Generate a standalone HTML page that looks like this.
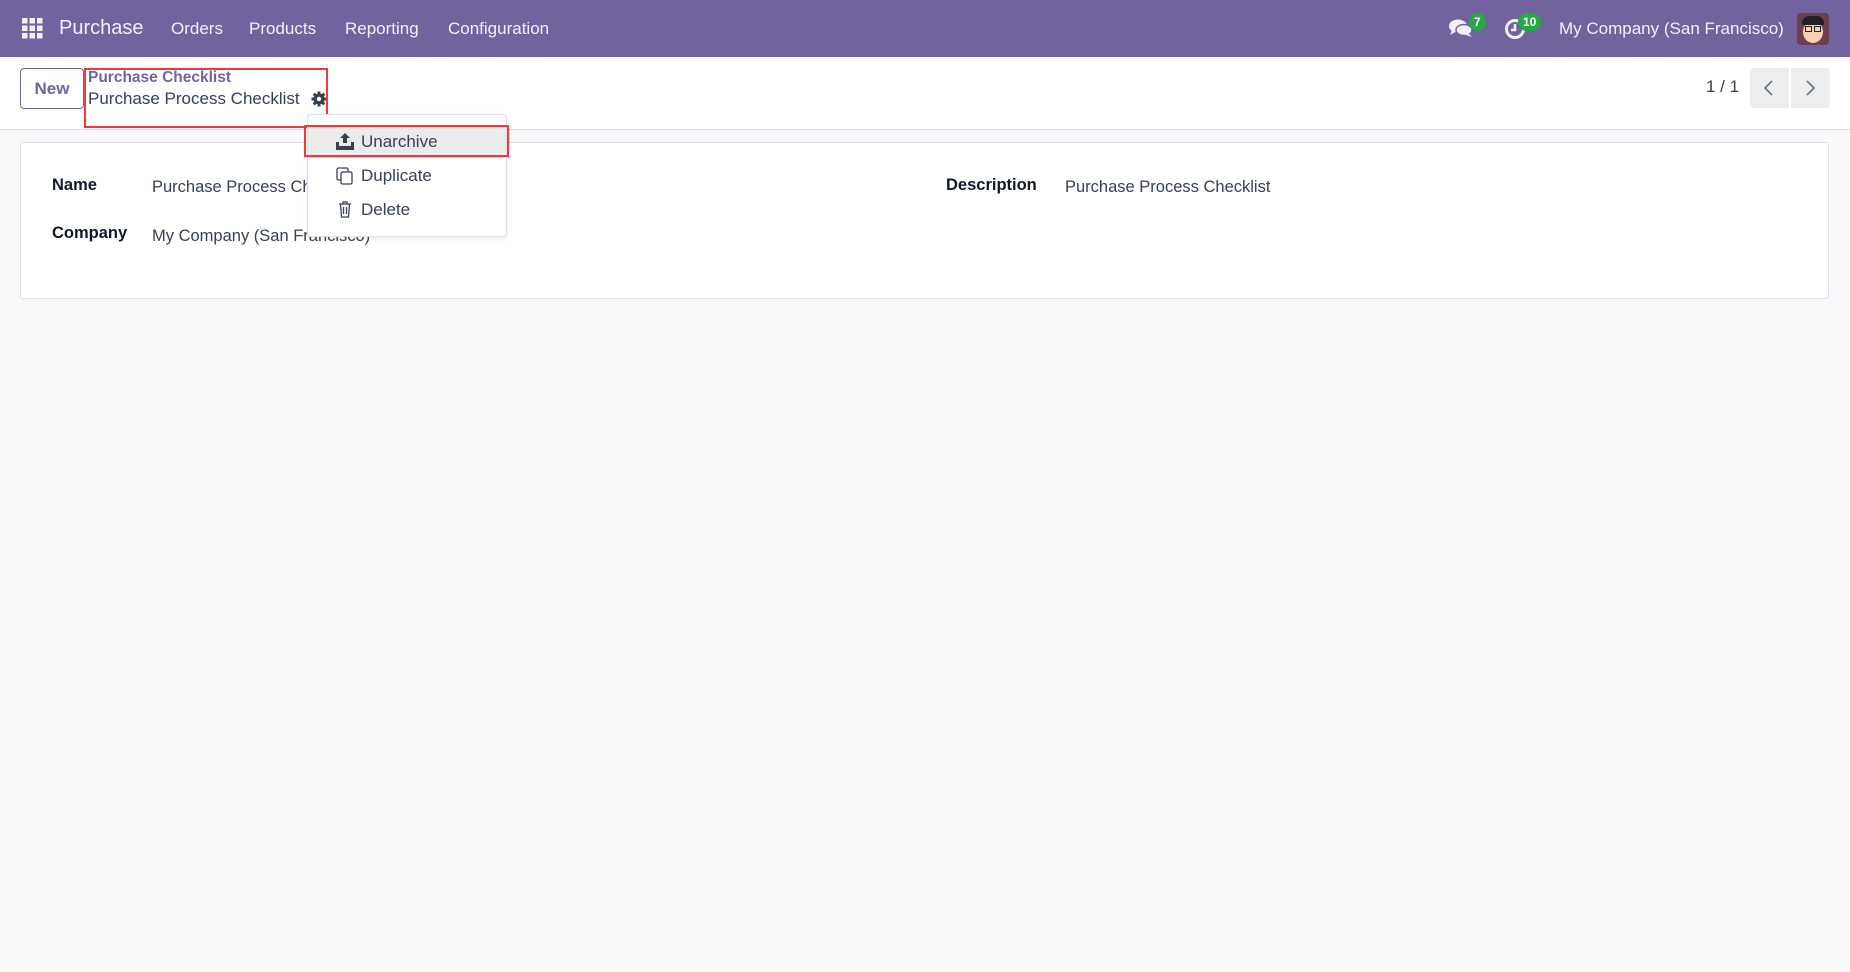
<!DOCTYPE html>
<html><head><meta charset="utf-8"><style>
*{box-sizing:border-box;margin:0;padding:0}
body{width:1850px;height:972px;background:#f8f9fa;font-family:"Liberation Sans",sans-serif;color:#374151;position:relative;overflow:hidden}
.nav{position:absolute;left:0;top:0;width:1850px;height:57px;background:#71639e;color:#fff}
.nav span{position:absolute;top:19px;font-size:17px;color:#f2f0f7}
.cp{position:absolute;left:0;top:57px;width:1850px;height:73px;background:#fff;border-bottom:1px solid #dee2e6}
.abs{position:absolute}
.card{position:absolute;left:20px;top:142px;width:1809px;height:157px;background:#fff;border:1px solid #dee2e6;border-radius:3px}
.lbl{position:absolute;font-weight:bold;font-size:16.5px;color:#111827}
.val{position:absolute;font-size:16.5px;color:#374151}
.badge{position:absolute;background:#28a745;color:#fff;font-size:12px;font-weight:bold;border-radius:9px;height:18px;line-height:18px;padding:0 5px}
</style></head><body>
<div class="nav">
 <svg class="abs" style="left:22px;top:18px" width="21" height="21" viewBox="0 0 21 21" fill="#f2f0f7">
  <rect x="0" y="0" width="5.5" height="5.5"/><rect x="7.5" y="0" width="5.5" height="5.5"/><rect x="15" y="0" width="5.5" height="5.5"/>
  <rect x="0" y="7.5" width="5.5" height="5.5"/><rect x="7.5" y="7.5" width="5.5" height="5.5"/><rect x="15" y="7.5" width="5.5" height="5.5"/>
  <rect x="0" y="15" width="5.5" height="5.5"/><rect x="7.5" y="15" width="5.5" height="5.5"/><rect x="15" y="15" width="5.5" height="5.5"/>
 </svg>
 <span style="left:59px;top:17px;font-size:20px">Purchase</span>
 <span style="left:171px">Orders</span>
 <span style="left:249px">Products</span>
 <span style="left:345px">Reporting</span>
 <span style="left:448px">Configuration</span>
 <svg class="abs" style="left:1449px;top:18px" width="24" height="20" viewBox="0 0 24 20" fill="#f2f0f7"><ellipse cx="9" cy="8" rx="9" ry="6.5"/><path d="M3 12 L1 17 L8 13Z"/><ellipse cx="15" cy="12" rx="8" ry="5.5" fill="#f2f0f7" stroke="#71639e" stroke-width="1.5"/><path d="M19 15 L23 19 L14 16Z"/></svg>
 <div class="badge" style="left:1469px;top:13px">7</div>
 <svg class="abs" style="left:1504px;top:18px" width="22" height="22" viewBox="0 0 22 22"><circle cx="11" cy="11" r="8.5" fill="none" stroke="#f2f0f7" stroke-width="3"/><path d="M11 6V12H7" fill="none" stroke="#f2f0f7" stroke-width="2.5"/></svg>
 <div class="badge" style="left:1518px;top:13px">10</div>
 <span style="left:1559px">My Company (San Francisco)</span>
 <div class="abs" style="left:1797px;top:13px;width:32px;height:32px;border-radius:4px;background:#6b3f4f;overflow:hidden">
  <div class="abs" style="left:6px;top:8px;width:20px;height:22px;border-radius:50%;background:#f6d2b5"></div>
  <div class="abs" style="left:5px;top:3px;width:22px;height:9px;border-radius:8px 8px 2px 2px;background:#222"></div>
  <div class="abs" style="left:8px;top:13px;width:7px;height:6px;border:1.5px solid #222"></div>
  <div class="abs" style="left:17px;top:13px;width:7px;height:6px;border:1.5px solid #222"></div>
 </div>
</div>
<div class="cp">
 <div class="abs" style="left:20px;top:11px;width:64px;height:41px;border:1px solid #71639e;border-radius:4px;color:#71639e;font-weight:bold;font-size:17px;text-align:center;line-height:39px">New</div>
 <div class="abs" style="left:88px;top:12px;color:#71639e;font-weight:bold;font-size:15.5px">Purchase Checklist</div>
 <div class="abs" style="left:88px;top:32px;color:#374151;font-size:17px">Purchase Process Checklist</div>
 <svg class="abs" style="left:311px;top:34px" width="16" height="16" viewBox="0 0 16 16"><g fill="#374151"><circle cx="8" cy="8" r="5.5"/><rect x="6.5" y="0.5" width="3" height="15"/><rect x="0.5" y="6.5" width="15" height="3"/><rect x="6.5" y="0.5" width="3" height="15" transform="rotate(45 8 8)"/><rect x="6.5" y="0.5" width="3" height="15" transform="rotate(-45 8 8)"/></g><circle cx="8" cy="8" r="2.2" fill="#fff"/></svg>
 <div class="abs" style="left:84px;top:11px;width:244px;height:60px;border:2px solid #f03a3a"></div>
 <div class="abs" style="left:1706px;top:20px;font-size:17px;color:#374151">1 / 1</div>
 <div class="abs" style="left:1750px;top:11px;width:39px;height:40px;background:#eceef0;border-radius:4px 0 0 4px"></div>
 <div class="abs" style="left:1791px;top:11px;width:39px;height:40px;background:#eceef0;border-radius:0 4px 4px 0"></div>
 <svg class="abs" style="left:1762px;top:22px" width="14" height="18" viewBox="0 0 14 18"><path d="M10 2 L3 9 L10 16" fill="none" stroke="#6b7280" stroke-width="1.6"/></svg>
 <svg class="abs" style="left:1803px;top:22px" width="14" height="18" viewBox="0 0 14 18"><path d="M4 2 L11 9 L4 16" fill="none" stroke="#6b7280" stroke-width="1.6"/></svg>
</div>
<div class="card">
 <div class="lbl" style="left:31px;top:33px">Name</div>
 <div class="val" style="left:131px;top:35px">Purchase Process Checklist</div>
 <div class="lbl" style="left:31px;top:81px">Company</div>
 <div class="val" style="left:131px;top:84px">My Company (San Francisco)</div>
 <div class="lbl" style="left:925px;top:33px">Description</div>
 <div class="val" style="left:1044px;top:35px">Purchase Process Checklist</div>
</div>
<div class="abs" style="left:307px;top:114px;width:200px;height:123px;background:#fff;border:1px solid #dee2e6;border-radius:4px;box-shadow:0 2px 6px rgba(0,0,0,.08)">
 <div class="abs" style="left:0;top:12px;width:198px;height:31px;background:#ebebeb"></div>
</div>
<svg class="abs" style="left:336px;top:133px" width="18" height="17" viewBox="0 0 18 17" fill="#374151"><path d="M9 0 L14 5 H11 V10 H7 V5 H4Z"/><path d="M0 9 H3 V13 H15 V9 H18 V17 H0Z"/></svg>
<div class="abs" style="left:361px;top:132px;font-size:17px;color:#374151">Unarchive</div>
<svg class="abs" style="left:336px;top:167px" width="17" height="18" viewBox="0 0 17 18"><rect x="1" y="1" width="11" height="12" rx="1.5" fill="none" stroke="#374151" stroke-width="1.3"/><rect x="5" y="5" width="11" height="12" rx="1.5" fill="#fff" stroke="#374151" stroke-width="1.3"/></svg>
<div class="abs" style="left:361px;top:166px;font-size:17px;color:#374151">Duplicate</div>
<svg class="abs" style="left:338px;top:201px" width="14" height="17" viewBox="0 0 14 17"><path d="M1 3 H13 M5 3 V1 H9 V3 M2.5 3 L3.5 16 H10.5 L11.5 3 M5.5 6 V13 M8.5 6 V13" fill="none" stroke="#374151" stroke-width="1.3"/></svg>
<div class="abs" style="left:361px;top:200px;font-size:17px;color:#374151">Delete</div>
<div class="abs" style="left:304px;top:125px;width:205px;height:32px;border:2px solid #f03a3a"></div>
</body></html>
